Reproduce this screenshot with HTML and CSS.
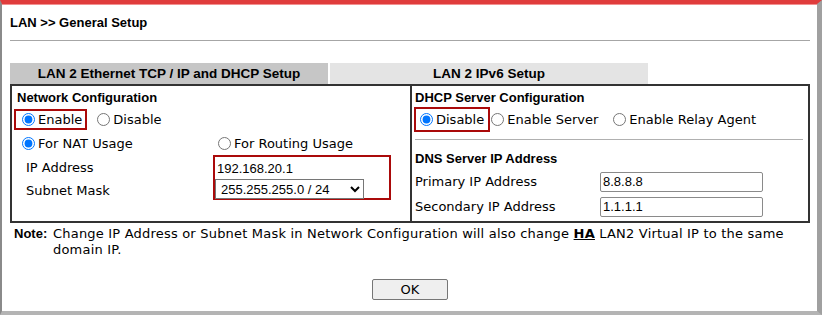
FILE: index.html
```html
<!DOCTYPE html>
<html lang="en">
<head>
    <meta charset="UTF-8">
    <title>LAN General Setup</title>
    <link rel="stylesheet" href="styles.css">
</head>
<body>
    <div class="frame">
        <div class="page">
            <h1 class="page-title">LAN &gt;&gt; General Setup</h1>

            <div class="tabs">
                <div class="tab is-active">LAN 2 Ethernet TCP / IP and DHCP Setup</div>
                <div class="tab">LAN 2 IPv6 Setup</div>
            </div>

            <div class="setup-box">
                <!-- left : network -->
                <div class="col col-left">
                    <div class="sec-title">Network Configuration</div>
                    <div class="radio-line">
                        <label class="hl hl-small"><input type="radio" name="lan" checked>Enable</label>
                        <label class="opt-disable"><input type="radio" name="lan">Disable</label>
                    </div>
                    <div class="usage-line">
                        <label><input type="radio" name="usage" checked>For NAT Usage</label>
                        <label><input type="radio" name="usage">For Routing Usage</label>
                    </div>
                    <div class="fields">
                        <div class="field-labels">
                            <div class="field-label">IP Address</div>
                            <div class="field-label">Subnet Mask</div>
                        </div>
                        <div class="hl hl-fields">
                            <input type="text" class="ip-input" value="192.168.20.1">
                            <select class="mask-select">
                                <option>255.255.255.0 / 24</option>
                            </select>
                        </div>
                    </div>
                </div>

                <!-- right : dhcp -->
                <div class="col col-right">
                    <div class="sec-title">DHCP Server Configuration</div>
                    <div class="radio-line dhcp-line">
                        <label class="hl hl-dhcp"><input type="radio" name="dhcp" checked>Disable</label>
                        <label class="opt-server"><input type="radio" name="dhcp">Enable Server</label>
                        <label class="opt-relay"><input type="radio" name="dhcp">Enable Relay Agent</label>
                    </div>
                    <div class="sep"></div>
                    <div class="sec-title dns-title">DNS Server IP Address</div>
                    <div class="dns-row">
                        <span>Primary IP Address</span>
                        <input type="text" class="dns-input" value="8.8.8.8">
                    </div>
                    <div class="dns-row">
                        <span>Secondary IP Address</span>
                        <input type="text" class="dns-input" value="1.1.1.1">
                    </div>
                </div>
            </div>

            <div class="note">
                <div class="note-head">Note:</div>
                <div class="note-text">
                    <div class="note-line"><span>Change IP Address or Subnet Mask in Network Configuration will also change</span> <u class="ha">HA</u> <span>LAN2 Virtual IP to the same</span></div>
                    <div class="note-line">domain IP.</div>
                </div>
            </div>

            <div class="actions">
                <button type="button" class="ok-btn">OK</button>
            </div>
        </div>
    </div>
</body>
</html>
```

FILE: styles.css
```css
html, body {margin:0;color:#000;}
body {font-family:"DejaVu Sans", Verdana, sans-serif;font-size:13px;background:#fff;}
h1 {margin:0;}
label {cursor:pointer;}
input[type=radio] {margin:0 3px 0 0;width:13px;height:13px;vertical-align:middle;}

.frame {box-sizing:border-box;width:822px;height:315px;border-top:4px solid #e03c3c;border-left:2px solid #8a8a8a;border-right:5px solid #a0a0a0;border-bottom:4px solid #b4b4b4;box-shadow:inset 0 1px 0 #f29090;overflow:hidden;}
.page {width:800px;padding-left:8px;}

.page-title {font-family:"Liberation Sans", Arial, sans-serif;font-size:13px;font-weight:bold;height:36px;line-height:38px;border-bottom:1px solid #a6a6a6;}

.tabs {display:flex;gap:2px;margin-top:22px;font-family:"Liberation Sans", Arial, sans-serif;font-size:13.5px;font-weight:bold;}
.tab {width:318px;height:21px;line-height:22px;text-align:center;background:#e4e4e4;}
.tab.is-active {background:#c6c6c6;}

.setup-box {display:grid;grid-template-columns:400px 1fr;height:139px;box-sizing:border-box;border:2px solid #333;}
.col-left {border-right:2px solid #333;padding-left:2px;}
.col-right {padding-left:3px;}

.sec-title {font-family:"Liberation Sans", Arial, sans-serif;font-size:13px;font-weight:bold;height:22px;line-height:23px;padding-left:3px;}
.col-right .sec-title {padding-left:0;}

.radio-line {display:flex;align-items:center;height:23px;}
.radio-line label {display:flex;align-items:center;}
.hl {border:2px solid #aa0a0a;box-sizing:border-box;}
.hl-small {height:21px;padding:0 3px 0 6px;}
.opt-disable {margin-left:10px;}

.usage-line {display:grid;grid-template-columns:196px 1fr;align-items:center;height:24px;padding-left:8px;}
.usage-line label {display:flex;align-items:center;}

.fields {display:flex;}
.field-labels {width:187px;padding-left:12px;padding-top:1px;}
.field-label {height:23px;line-height:23px;}
.hl-fields {width:178px;height:45px;padding:0;}
.ip-input {display:block;box-sizing:border-box;width:100%;height:22px;border:0;padding:0 2px;font-family:"Liberation Sans", Arial, sans-serif;font-size:13px;outline:0;}
.mask-select {display:block;box-sizing:border-box;width:149px;height:20px;border:1px solid #767676;border-radius:0;font-family:"Liberation Sans", Arial, sans-serif;font-size:13px;padding:0 1px;background:#fff;color:#000;}

.dhcp-line {height:25px;margin-top:-1px;}
.hl-dhcp {height:25px;padding:0 4px 0 4px;margin-left:-1px;}
.opt-server {margin-left:1px;}
.opt-relay {margin-left:15px;}

.sep {height:1px;background:#b0b0b0;margin:7px 5px 9px 0;}
.dns-title {height:20px;line-height:20px;}
.dns-row {display:flex;align-items:center;height:25px;}
.dns-row span {width:185px;}
.dns-input {box-sizing:border-box;width:163px;height:20px;border:1px solid #8a8a8a;border-radius:2px;padding:0 2px;font-family:"Liberation Sans", Arial, sans-serif;font-size:13px;}

.note {display:flex;margin-top:3px;padding-left:4px;line-height:16px;}
.note-head {width:39px;flex:none;font-family:"Liberation Sans", Arial, sans-serif;font-weight:bold;}
.note-text {letter-spacing:.2px;}
.note-line {white-space:nowrap;}
.ha {font-weight:bold;}

.actions {text-align:center;margin-top:21px;}
.ok-btn {width:76px;height:21px;font-family:"DejaVu Sans", Verdana, sans-serif;font-size:13px;background:#efefef;border:1px solid #767676;border-radius:2px;color:#000;padding:0;}
```
